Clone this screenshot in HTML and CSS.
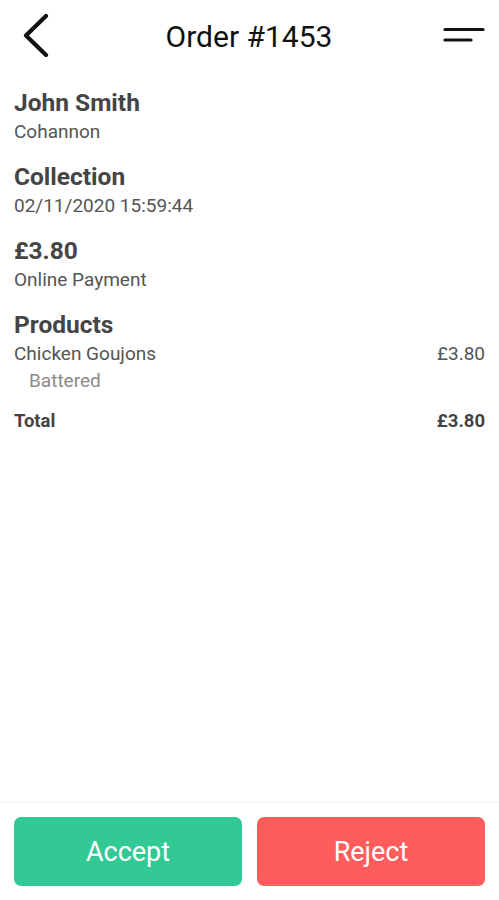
FILE: index.html
```html
<!DOCTYPE html>
<html lang="en">
<head>
<meta charset="utf-8">
<title>Order #1453</title>
<link rel="stylesheet" href="styles.css">
</head>
<body>
<div class="app">
  <header class="topbar">
    <button class="icon-btn back" aria-label="Back">
      <svg width="30" height="44" viewBox="0 0 30 44"><polyline points="25,3 5,22.5 25,42" fill="none" stroke="#111" stroke-width="4.2" stroke-linecap="round" stroke-linejoin="round"/></svg>
    </button>
    <h1 class="title">Order #1453</h1>
    <button class="icon-btn menu" aria-label="Menu">
      <svg width="42" height="20" viewBox="0 0 42 20"><line x1="2" y1="3.5" x2="40" y2="3.5" stroke="#111" stroke-width="3.2" stroke-linecap="round"/><line x1="2" y1="14" x2="28" y2="14" stroke="#111" stroke-width="3.2" stroke-linecap="round"/></svg>
    </button>
  </header>

  <main class="content">
    <section class="block">
      <div class="block-title">John Smith</div>
      <div class="block-sub">Cohannon</div>
    </section>
    <section class="block">
      <div class="block-title">Collection</div>
      <div class="block-sub">02/11/2020 15:59:44</div>
    </section>
    <section class="block">
      <div class="block-title">£3.80</div>
      <div class="block-sub">Online Payment</div>
    </section>
    <section class="block">
      <div class="block-title">Products</div>
      <div class="line">
        <span>Chicken Goujons</span>
        <span>£3.80</span>
      </div>
      <div class="option">Battered</div>
      <div class="line total">
        <span>Total</span>
        <span>£3.80</span>
      </div>
    </section>
  </main>

  <footer class="actions">
    <button class="action accept">Accept</button>
    <button class="action reject">Reject</button>
  </footer>
</div>
</body>
</html>
```

FILE: styles.css
```css
* { box-sizing: border-box; }
html, body { margin: 0; padding: 0; background: #fff; }
body {
  font-family: Roboto, "Noto Sans", "Liberation Sans", sans-serif;
  color: #444;
}
.app {
  display: flex;
  flex-direction: column;
  height: 100vh;
}
.topbar {
  display: flex;
  align-items: center;
  justify-content: space-between;
  height: 72px;
  padding: 0 14px 0 21px;
}
.icon-btn {
  border: 0;
  background: none;
  padding: 0;
  display: flex;
  align-items: center;
}
.back { width: 34px; height: 44px; margin-top: -3px; }
.menu { width: 44px; justify-content: flex-end; }
.title {
  margin: 0 0 0 2px;
  font-weight: 400;
  font-size: 30px;
  color: #111;
}
.content {
  flex: 1;
  padding: 16px 14px 0;
}
.block { margin-bottom: 17px; }
.block-title {
  font-weight: 700;
  font-size: 24.5px;
  line-height: 30px;
  color: #454545;
}
.block-sub {
  font-size: 19px;
  line-height: 27px;
  color: #555;
}
.line {
  display: flex;
  justify-content: space-between;
  font-size: 19px;
  line-height: 27px;
  color: #555;
}
.option {
  padding-left: 15px;
  font-size: 19px;
  line-height: 27px;
  color: #8a8a8a;
}
.total {
  margin-top: 14px;
  font-weight: 700;
  font-size: 18.5px;
  color: #444;
}
.actions {
  display: grid;
  grid-template-columns: 1fr 1fr;
  gap: 15px;
  padding: 14px 14px 14px;
  border-top: 1px solid #f2f2f2;
}
.action {
  height: 69px;
  border: 0;
  border-radius: 7px;
  color: #fff;
  font-family: Roboto, "Noto Sans", sans-serif;
  font-size: 27px;
  font-weight: 400;
}
.accept { background: #33c995; }
.reject { background: #ff5c5c; }
```
